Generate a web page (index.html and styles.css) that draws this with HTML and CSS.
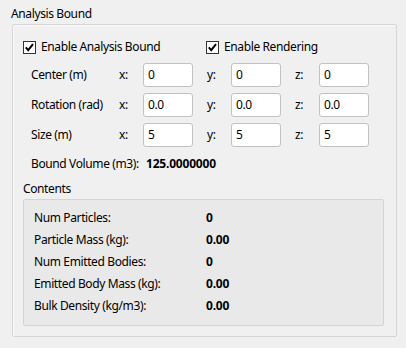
FILE: index.html
```html
<!DOCTYPE html>
<html>
<head>
<meta charset="utf-8">
<link rel="stylesheet" href="styles.css">
</head>
<body>
<div class="title">Analysis Bound</div>
<div class="group">
  <div class="checks">
    <label class="check c1"><span class="box"><svg width="13" height="13" viewBox="0 0 13 13"><rect x="0.5" y="0.5" width="12" height="12" fill="#fff" stroke="#333"/><path d="M2.8 6.4 L5.2 9.2 L10 3.2" fill="none" stroke="#000" stroke-width="2"/></svg></span>Enable Analysis Bound</label>
    <label class="check"><span class="box"><svg width="13" height="13" viewBox="0 0 13 13"><rect x="0.5" y="0.5" width="12" height="12" fill="#fff" stroke="#333"/><path d="M2.8 6.4 L5.2 9.2 L10 3.2" fill="none" stroke="#000" stroke-width="2"/></svg></span>Enable Rendering</label>
  </div>
  <div class="vec first">
    <span class="lbl">Center (m)</span>
    <span class="axis">x:</span><span class="inp">0</span><span class="axis">y:</span><span class="inp">0</span><span class="axis">z:</span><span class="inp">0</span>
  </div>
  <div class="vec">
    <span class="lbl">Rotation (rad)</span>
    <span class="axis">x:</span><span class="inp">0.0</span><span class="axis">y:</span><span class="inp">0.0</span><span class="axis">z:</span><span class="inp">0.0</span>
  </div>
  <div class="vec">
    <span class="lbl">Size (m)</span>
    <span class="axis">x:</span><span class="inp">5</span><span class="axis">y:</span><span class="inp">5</span><span class="axis">z:</span><span class="inp">5</span>
  </div>
  <div class="volume"><span class="vlbl">Bound Volume (m3):</span><b>125.0000000</b></div>
  <div class="subtitle">Contents</div>
  <div class="contents">
    <div class="row"><span class="k">Num Particles:</span><b>0</b></div>
    <div class="row"><span class="k">Particle Mass (kg):</span><b>0.00</b></div>
    <div class="row"><span class="k">Num Emitted Bodies:</span><b>0</b></div>
    <div class="row"><span class="k">Emitted Body Mass (kg):</span><b>0.00</b></div>
    <div class="row"><span class="k">Bulk Density (kg/m3):</span><b>0.00</b></div>
  </div>
</div>
</body>
</html>
```
FILE: styles.css
```css
html, body {
  margin: 0;
  padding: 0;
  background: #f0f0f0;
}
body {
  width: 406px;
  height: 348px;
  font-family: "Noto Sans", "Open Sans", sans-serif;
  font-size: 12px;
  line-height: 16px;
  color: #000;
  letter-spacing: -0.38px;
}
.title {
  padding: 6px 0 2px 11px;
  height: 16px;
}
.group {
  margin-left: 12px;
  border: 1px solid #d6d6d6;
  border-radius: 2px;
  box-shadow: inset 1px 1px 0 #fafafa;
  background: #f0f0f0;
  padding: 14px 0 0 10px;
  box-sizing: content-box;
  width: 373px;
  height: 297px;
}
.checks {
  display: flex;
  height: 16px;
}
.check {
  display: flex;
  align-items: center;
  gap: 5px;
}
.check.c1 {
  width: 183px;
}
.box {
  display: block;
  width: 13px;
  height: 13px;
  line-height: 0;
}
.vec {
  display: flex;
  align-items: center;
  height: 24px;
  margin-top: 6px;
  padding-left: 8px;
}
.vec.first {
  margin-top: 8px;
}
.lbl {
  width: 88px;
}
.axis {
  width: 24px;
}
.inp {
  box-sizing: border-box;
  width: 50px;
  height: 24px;
  border: 1px solid #c2c2c2;
  border-radius: 3px;
  background: #fff;
  padding-left: 4px;
  line-height: 22px;
  margin-right: 14px;
}
.volume {
  display: flex;
  padding-left: 8px;
  margin-top: 9px;
  height: 16px;
}
.vlbl {
  width: 115px;
}
.subtitle {
  margin-top: 9px;
  height: 16px;
}
.contents {
  margin-top: 2px;
  border: 1px solid #d4d4d4;
  border-radius: 2px;
  background: #e9e9e9;
  padding: 7px 0 0 10px;
  box-sizing: border-box;
  width: 361px;
  height: 127px;
}
.row {
  display: flex;
  align-items: center;
  height: 22px;
}
.k {
  width: 172px;
}
b {
  font-weight: bold;
  letter-spacing: -0.2px;
}
```
